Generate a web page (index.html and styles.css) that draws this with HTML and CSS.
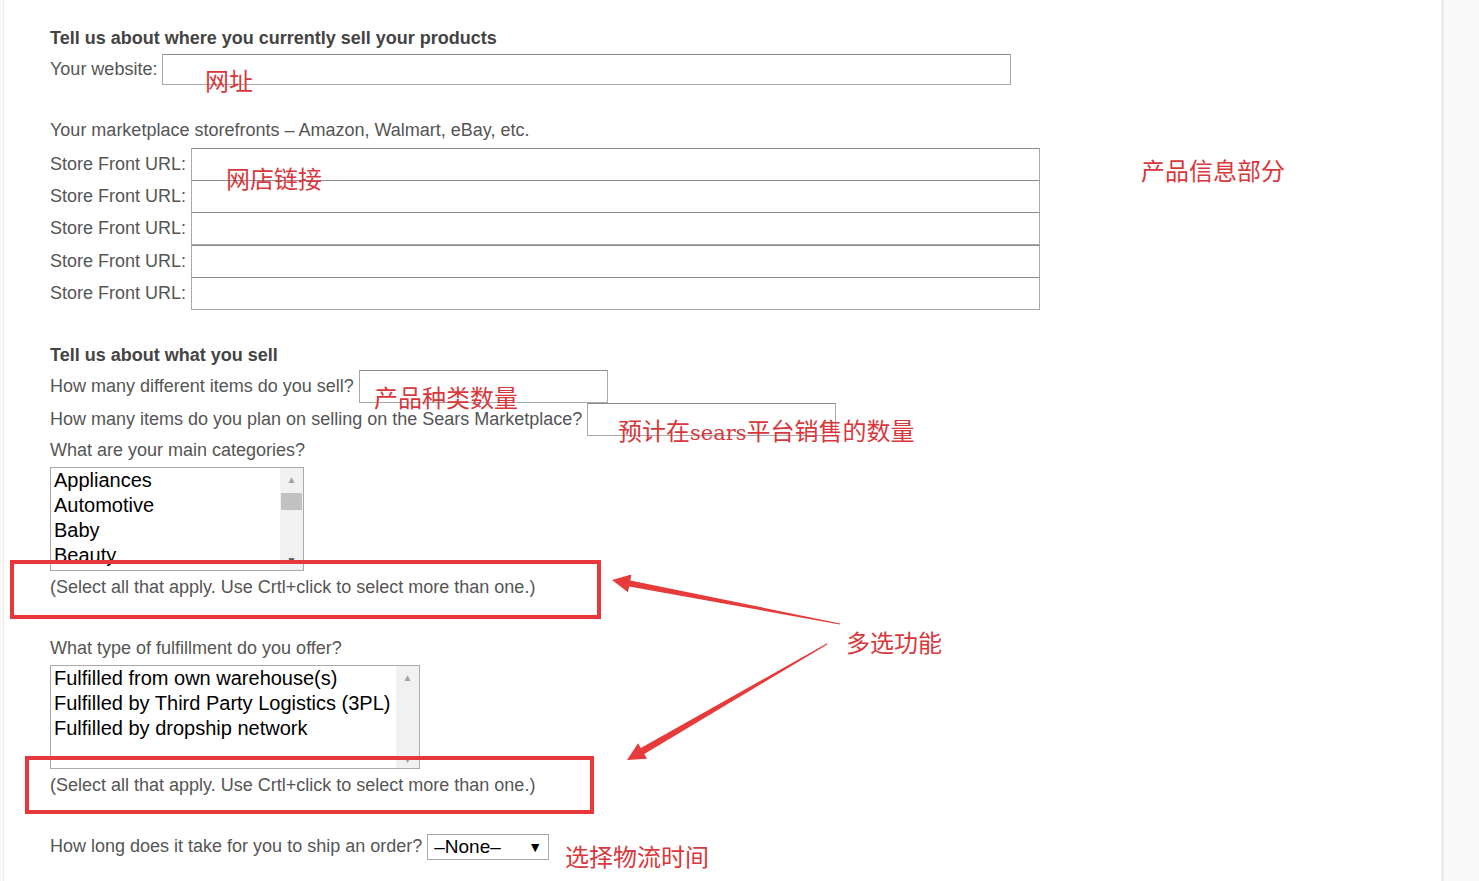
FILE: index.html
```html
<!DOCTYPE html>
<html lang="en">
  <head>
    <meta charset="UTF-8" />
    <meta name="viewport" content="width=device-width, initial-scale=1.0" />
    <title>Sears Marketplace - Seller Info</title>
    <link rel="stylesheet" href="styles.css">
  </head>
  <body>
    <div class="page">
      <form class="sellerform">
        <h3>Tell us about where you currently sell your products</h3>
        <div class="row website">
          <label>Your website:</label>
          <input type="text" class="felt felt-website">
        </div>

        <p class="tekst marketplace">Your marketplace storefronts – Amazon, Walmart, eBay, etc.</p>
        <div class="stores">
          <div class="row store"><label>Store Front URL:</label><input type="text" class="felt felt-store"></div>
          <div class="row store"><label>Store Front URL:</label><input type="text" class="felt felt-store"></div>
          <div class="row store"><label>Store Front URL:</label><input type="text" class="felt felt-store"></div>
          <div class="row store"><label>Store Front URL:</label><input type="text" class="felt felt-store"></div>
          <div class="row store"><label>Store Front URL:</label><input type="text" class="felt felt-store"></div>
        </div>

        <h3 class="sell">Tell us about what you sell</h3>
        <div class="row antal">
          <label>How many different items do you sell?</label>
          <input type="text" class="felt felt-lille">
        </div>
        <div class="row antal antal2">
          <label>How many items do you plan on selling on the Sears Marketplace?</label>
          <input type="text" class="felt felt-lille">
        </div>

        <p class="tekst kategori">What are your main categories?</p>
        <div class="listbox listbox-kat">
          <ul>
            <li>Appliances</li>
            <li>Automotive</li>
            <li>Baby</li>
            <li>Beauty</li>
          </ul>
          <div class="scrollbar">
            <span class="pil op">&#9650;</span>
            <span class="thumb"></span>
            <span class="pil ned">&#9660;</span>
          </div>
        </div>
        <p class="tekst note">(Select all that apply. Use Crtl+click to select more than one.)</p>

        <p class="tekst fulfil">What type of fulfillment do you offer?</p>
        <div class="listbox listbox-ful">
          <ul>
            <li>Fulfilled from own warehouse(s)</li>
            <li>Fulfilled by Third Party Logistics (3PL)</li>
            <li>Fulfilled by dropship network</li>
          </ul>
          <div class="scrollbar">
            <span class="pil op">&#9650;</span>
            <span class="pil ned">&#9660;</span>
          </div>
        </div>
        <p class="tekst note">(Select all that apply. Use Crtl+click to select more than one.)</p>

        <div class="row ship">
          <label>How long does it take for you to ship an order?</label>
          <div class="dropdown"><span>–None–</span><span class="caret">&#9660;</span></div>
        </div>
      </form>

      <!-- annoteringer lagt ovenpå formularen -->
      <span class="note-rod n-website">网址</span>
      <span class="note-rod n-store">网店链接</span>
      <span class="note-rod n-info">产品信息部分</span>
      <span class="note-rod n-antal">产品种类数量</span>
      <span class="note-rod n-sears">预计在<span class="latin">sears</span>平台销售的数量</span>
      <span class="note-rod n-multi">多选功能</span>
      <span class="note-rod n-ship">选择物流时间</span>

      <div class="ramme ramme1"></div>
      <div class="ramme ramme2"></div>

      <svg class="pile" width="1479" height="881" viewBox="0 0 1479 881">
        <polygon points="840.1,623.5 630.3,580.4 631.4,574.5 612,580 628.0,592.3 629.1,586.4 839.9,624.5" fill="#e73a3b"/>
        <polygon points="827.3,644.4 644.3,754.0 647.1,758.8 627,760 638.1,743.3 640.8,747.9 826.7,643.6" fill="#e73a3b"/>
      </svg>
    </div>
  </body>
</html>
```

FILE: styles.css
```css
body {
  margin: 0;
  background-color: #f8f8f8;
  font-family: "Liberation Sans", Arial, sans-serif;
}
.page {
  position: relative;
  width: 1441px;
  height: 881px;
  margin-left: 3px;
  box-sizing: border-box;
  border-left: 1px solid #ececec;
  border-right: 3px solid #ececec;
  background-color: white;
  overflow: hidden;
}
.sellerform {
  padding: 28px 0 0 46px;
  color: #555;
  font-size: 18px;
}
h3 {
  margin: 0;
  font-size: 18px;
  line-height: 20px;
  color: #444;
}
.tekst {
  margin: 0;
  line-height: 20px;
}
.row {
  display: flex;
  align-items: center;
}
.row label {
  margin-right: 5px;
}
.felt {
  box-sizing: border-box;
  margin: 0;
  border: 1px solid #a9a9a9;
  border-top-color: #8c8c8c;
  background: white;
}
.website {
  margin-top: 6px;
  height: 31px;
}
.felt-website {
  width: 849px;
  height: 31px;
}
.marketplace {
  margin-top: 35px;
}
.stores {
  margin-top: 8px;
}
.store {
  height: 32.4px;
}
.felt-store {
  width: 849px;
  height: 33px;
}
.sell {
  margin-top: 35px;
}
.antal {
  margin-top: 6px;
  height: 32px;
}
.antal2 {
  margin-top: 1px;
}
.felt-lille {
  width: 249px;
  height: 33px;
}
.kategori {
  margin-top: 4px;
}

/* liste-boks med falsk scrollbar */
.listbox {
  position: relative;
  box-sizing: border-box;
  margin-top: 7px;
  height: 104px;
  border: 1px solid #a9a9a9;
  background: white;
  overflow: hidden;
  color: black;
  font-size: 20px;
}
.listbox-kat {
  width: 254px;
}
.listbox-ful {
  width: 370px;
}
.listbox ul {
  list-style: none;
  margin: 0;
  padding: 0 0 0 3px;
}
.listbox li {
  line-height: 25px;
  white-space: nowrap;
}
.scrollbar {
  position: absolute;
  top: 0;
  right: 0;
  bottom: 0;
  width: 23px;
  background: #f1f1f1;
}
.pil {
  position: absolute;
  left: 0;
  width: 23px;
  text-align: center;
  font-size: 10px;
  color: #a3a3a3;
}
.op {
  top: 6px;
}
.ned {
  bottom: 4px;
  color: #505050;
}
.listbox-ful .ned {
  bottom: 3px;
  color: #a3a3a3;
}
.thumb {
  position: absolute;
  left: 1px;
  top: 25px;
  width: 21px;
  height: 17px;
  background: #c1c1c1;
}
.note {
  margin-top: 6px;
}
.fulfil {
  margin-top: 41px;
}
.ship {
  margin-top: 39px;
}
.dropdown {
  box-sizing: border-box;
  display: flex;
  justify-content: space-between;
  align-items: center;
  width: 122px;
  height: 26px;
  padding: 0 6px 0 6px;
  border: 1px solid #a9a9a9;
  color: black;
  font-size: 19px;
}
.caret {
  font-size: 14px;
}

/* røde annoteringer (koordinater regnet fra .page, der starter 4px inde) */
.note-rod {
  position: absolute;
  font-family: "Liberation Serif", "Noto Sans CJK SC", serif;
  font-size: 24px;
  line-height: 24px;
  color: #d8383c;
  white-space: nowrap;
}
.note-rod .latin {
  font-family: "DejaVu Serif", serif;
  font-size: 21px;
}
.n-website { left: 201px; top: 70px; }
.n-store { left: 222px; top: 168px; }
.n-info { left: 1137px; top: 160px; }
.n-antal { left: 370px; top: 387px; }
.n-sears { left: 614px; top: 420px; }
.n-multi { left: 842px; top: 632px; }
.n-ship { left: 561px; top: 846px; }

.ramme {
  position: absolute;
  box-sizing: border-box;
  border: 4px solid #e8373a;
}
.ramme1 {
  left: 6px;
  top: 560px;
  width: 591px;
  height: 59px;
}
.ramme2 {
  left: 21px;
  top: 756px;
  width: 569px;
  height: 58px;
}
.pile {
  position: absolute;
  left: -4px;
  top: 0;
  pointer-events: none;
}
```
